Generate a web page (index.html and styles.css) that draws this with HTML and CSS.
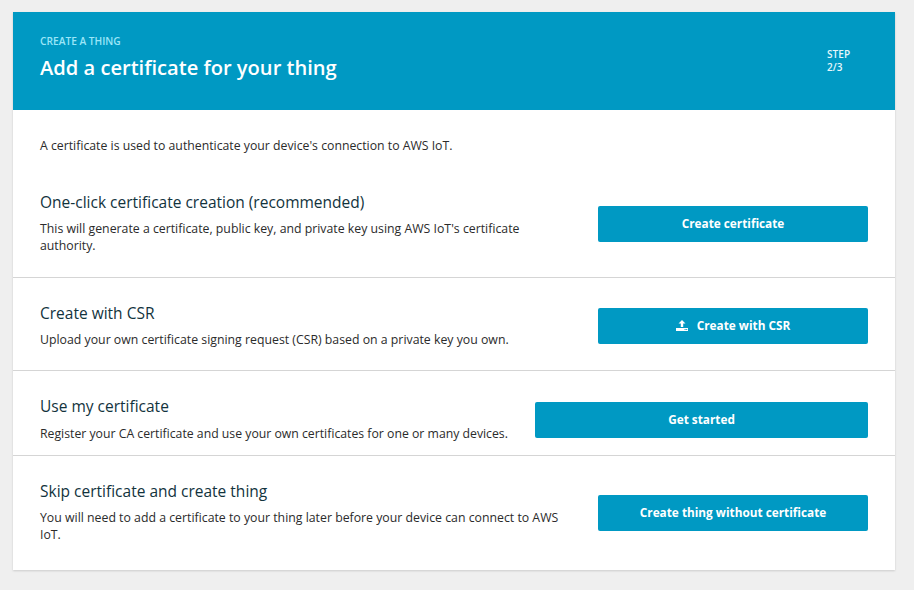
FILE: index.html
```html
<!DOCTYPE html>
<html lang="en">
<head>
<meta charset="utf-8">
<title>Add a certificate for your thing</title>
<link rel="stylesheet" href="styles.css">
</head>
<body>
<main class="card">
  <header class="banner">
    <div class="banner-text">
      <div class="eyebrow">CREATE A THING</div>
      <h1 class="title">Add a certificate for your thing</h1>
    </div>
    <div class="step">STEP<br>2/3</div>
  </header>
  <p class="intro">A certificate is used to authenticate your device's connection to AWS IoT.</p>
  <section class="row row-first">
    <div class="info">
      <h2 class="heading">One-click certificate creation (recommended)</h2>
      <p class="desc">This will generate a certificate, public key, and private key using AWS IoT's certificate authority.</p>
    </div>
    <button class="btn">Create certificate</button>
  </section>
  <section class="row row-csr">
    <div class="info">
      <h2 class="heading">Create with CSR</h2>
      <p class="desc">Upload your own certificate signing request (CSR) based on a private key you own.</p>
    </div>
    <button class="btn">
      <svg class="icon" viewBox="0 0 12 11" width="12" height="11" aria-hidden="true"><path fill="#fff" d="M6 0 9.5 3.6H7.2V7H4.8V3.6H2.5Z"/><path fill="#fff" fill-rule="evenodd" d="M0 8h12v3H0Zm8.6 1v1h1V9Zm1.6 0v1h1V9Z"/></svg>
      Create with CSR
    </button>
  </section>
  <section class="row row-own">
    <div class="info info-wide">
      <h2 class="heading">Use my certificate</h2>
      <p class="desc">Register your CA certificate and use your own certificates for one or many devices.</p>
    </div>
    <button class="btn btn-wide">Get started</button>
  </section>
  <section class="row row-skip">
    <div class="info">
      <h2 class="heading">Skip certificate and create thing</h2>
      <p class="desc">You will need to add a certificate to your thing later before your device can connect to AWS IoT.</p>
    </div>
    <button class="btn">Create thing without certificate</button>
  </section>
</main>
</body>
</html>
```
FILE: styles.css
```css
* { box-sizing: border-box; }
html, body { height: 100%; }
body {
  margin: 0;
  padding: 12px 19px 0 13px;
  background: #efefef;
  font-family: "Open Sans", "Noto Sans", sans-serif;
  color: #2b2b2b;
  overflow: hidden;
}
.card {
  height: 558px;
  background: #fff;
  box-shadow: 0 1px 2px rgba(0, 0, 0, 0.15);
}
.banner {
  height: 98px;
  background: #0099c3;
  padding: 23px 44px 0 27px;
  display: flex;
  justify-content: space-between;
}
.eyebrow {
  font-size: 10.2px;
  line-height: 13px;
  font-weight: 600;
  color: #9be6f8;
}
.title {
  margin: 7px 0 0;
  font-size: 20.1px;
  line-height: 26px;
  font-weight: 600;
  color: #fff;
}
.step {
  width: 24px;
  margin-top: 13px;
  font-size: 10px;
  letter-spacing: 0.1px;
  line-height: 13px;
  font-weight: 600;
  color: #e6f7fb;
}
.intro {
  margin: 0;
  padding: 27px 27px 0;
  font-size: 12.27px;
  line-height: 17px;
}
.row {
  display: flex;
  align-items: center;
  justify-content: space-between;
  padding: 0 27px;
  border-bottom: 1px solid #d5d5d5;
}
.row-first { height: 124px; padding-top: 16px; }
.row-csr { height: 93px; padding-top: 4px; }
.row-own { height: 85px; padding-top: 14px; }
.row-own .heading { margin-bottom: 9px; }
.row-own .desc { font-size: 12.25px; }
.row-skip { height: 115px; border-bottom: 0; padding-bottom: 2px; }
.info { width: 530px; padding-bottom: 2px; }
.info-wide { width: 490px; }
.heading {
  margin: 0 0 8px;
  font-size: 15.5px;
  line-height: 20px;
  font-weight: 400;
  color: #12333d;
}
.desc {
  margin: 0;
  font-size: 12.3px;
  line-height: 17px;
}
.btn {
  flex: none;
  width: 270px;
  height: 36px;
  padding: 0 0 2px;
  border: 0;
  border-radius: 2px;
  background: #0099c3;
  color: #fff;
  font: 700 11.8px "Open Sans", "Noto Sans", sans-serif;
  display: flex;
  align-items: center;
  justify-content: center;
  gap: 9px;
}
.btn-wide { width: 333px; }
.icon { display: block; }
```
